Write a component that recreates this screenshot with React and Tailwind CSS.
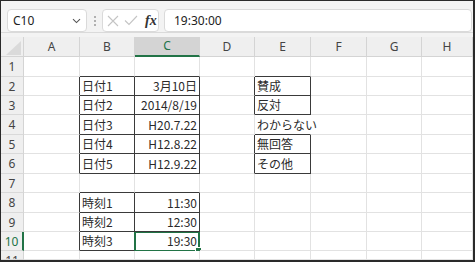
import React from 'react';

const COLS = [
  { key: 'A', w: 'w-[56px]' },
  { key: 'B', w: 'w-[55px]' },
  { key: 'C', w: 'w-[65px]' },
  { key: 'D', w: 'w-[55px]' },
  { key: 'E', w: 'w-[56px]' },
  { key: 'F', w: 'w-[56px]' },
  { key: 'G', w: 'w-[55px]' },
  { key: 'H', w: 'w-[51px]' },
];

const ROW_H = ['h-[20px]', 'h-[19px]', 'h-[19px]', 'h-[20px]', 'h-[19px]', 'h-[20px]', 'h-[19px]', 'h-[20px]', 'h-[19px]', 'h-[19px]', 'h-[9px]'];

const CELLS = {
  B2: '日付1', C2: '3月10日',
  B3: '日付2', C3: '2014/8/19',
  B4: '日付3', C4: 'H20.7.22',
  B5: '日付4', C5: 'H12.8.22',
  B6: '日付5', C6: 'H12.9.22',
  E2: '賛成', E3: '反対', E4: 'わからない', E5: '無回答', E6: 'その他',
  B8: '時刻1', C8: '11:30',
  B9: '時刻2', C9: '12:30',
  B10: '時刻3', C10: '19:30',
};

const RIGHT = ['C2', 'C3', 'C4', 'C5', 'C6', 'C8', 'C9', 'C10'];

const BOXED = new Set([
  'B2', 'C2', 'B3', 'C3', 'B4', 'C4', 'B5', 'C5', 'B6', 'C6',
  'E2', 'E3', 'E5', 'E6',
  'B8', 'C8', 'B9', 'C9', 'B10', 'C10',
]);

const LETTERS = 'ABCDEFGH';

function isBox(col, row) {
  return BOXED.has(col + row);
}

function Cell({ col, row }) {
  const next = LETTERS[LETTERS.indexOf(col.key) + 1];
  const rightDark = isBox(col.key, row) || (next && isBox(next, row));
  const bottomDark = isBox(col.key, row) || isBox(col.key, row + 1);
  const overflowHide = col.key === 'E' && row === 4;
  const id = col.key + row;
  const text = CELLS[id];
  const right = RIGHT.includes(id);

  return (
    <div
      className={`relative shrink-0 ${col.w} h-full border-r border-b ${
        rightDark ? 'border-r-[#3a3a3a]' : overflowHide ? 'border-r-white' : 'border-r-[#e2e2e2]'
      } ${bottomDark ? 'border-b-[#3a3a3a]' : 'border-b-[#e2e2e2]'} flex items-center ${
        right ? 'justify-end pr-[2px]' : 'pl-[2px]'
      } whitespace-nowrap text-[12px] text-[#2a2a2a]`}
    >
      {text && <span className="leading-none">{text}</span>}
      {id === 'C10' && (
        <>
          <div className="absolute left-[-1px] top-[-1px] right-[-1px] bottom-[-2px] border-2 border-[#217346] pointer-events-none" />
          <div className="absolute right-[-2px] bottom-[-3px] w-[5px] h-[5px] bg-[#217346] outline outline-1 outline-white" />
        </>
      )}
    </div>
  );
}

function Toolbar() {
  return (
    <div className="h-[32px] shrink-0 bg-[#f3f3f3] border-b border-[#dadada] flex items-start pt-[8px] pl-[6px] pr-[1px] font-['Noto_Sans','Open_Sans',sans-serif] text-[#222]">
      <div className="w-[80px] h-[23px] rounded-[4px] border border-[#dadada] bg-white flex items-center justify-between pl-[5px] pr-[5px]">
        <span className="text-[12px] leading-none">C10</span>
        <svg width="9" height="6" viewBox="0 0 9 6">
          <path d="M1 1.2 L4.5 4.6 L8 1.2" fill="none" stroke="#555" strokeWidth="1.1" />
        </svg>
      </div>
      <div className="w-[15px] h-[23px] flex flex-col items-center justify-center gap-[2px]">
        <span className="w-[2px] h-[2px] rounded-full bg-[#9a9a9a]" />
        <span className="w-[2px] h-[2px] rounded-full bg-[#9a9a9a]" />
        <span className="w-[2px] h-[2px] rounded-full bg-[#9a9a9a]" />
      </div>
      <div className="w-[57px] h-[23px] rounded-[4px] border border-[#dadada] bg-white flex items-center pl-[4px]">
        <svg width="12" height="12" viewBox="0 0 12 12">
          <path d="M1 1 L11 11 M11 1 L1 11" stroke="#c4c4c4" strokeWidth="1.1" />
        </svg>
        <svg className="ml-[5px]" width="14" height="11" viewBox="0 0 14 11">
          <path d="M1 5.5 L5 9.5 L13 1" fill="none" stroke="#c4c4c4" strokeWidth="1.1" />
        </svg>
        <span className="ml-[7px] font-['Liberation_Serif',serif] italic font-bold text-[14px] leading-none text-[#333]">fx</span>
      </div>
      <div className="flex-1 ml-[5px] h-[23px] rounded-[4px] border border-[#dadada] bg-white flex items-center pl-[9px]">
        <span className="text-[12px] leading-none">19:30:00</span>
      </div>
    </div>
  );
}

function HeaderRow() {
  return (
    <div className="h-[24px] shrink-0 flex bg-[#f3f3f3] font-['Noto_Sans','Open_Sans',sans-serif] text-[12px] text-[#444]">
      <div className="w-[23px] shrink-0 h-full pt-[4px]">
        <div className="h-full border-r border-b border-[#d4d4d4] bg-[#efefef] flex items-end justify-end pr-[2px] pb-[1px]">
          <svg width="15" height="14" viewBox="0 0 15 14">
            <path d="M15 0 L15 14 L0 14 Z" fill="#dadada" />
          </svg>
        </div>
      </div>
      {COLS.map((c) => (
        <div key={c.key} className={`${c.w} shrink-0 h-full pt-[4px]`}>
          {c.key === 'C' ? (
            <div className="h-full bg-[#d4d4d4] border-r border-[#d4d4d4] border-b-2 border-b-[#217346] flex items-center justify-center text-[#217346]">
              {c.key}
            </div>
          ) : (
            <div className="h-full bg-[#efefef] border-r border-b border-[#d4d4d4] flex items-center justify-center">
              {c.key}
            </div>
          )}
        </div>
      ))}
    </div>
  );
}

export default function App() {
  const rows = Array.from({ length: 11 }, (_, i) => i + 1);
  return (
    <div className="w-[475px] h-[262px] overflow-hidden bg-white border-t border-l border-r-2 border-b-2 border-[#2a2a2a] flex flex-col">
      <Toolbar />
      <HeaderRow />
      <div className="flex flex-col font-['Noto_Sans_CJK_JP','Noto_Sans',sans-serif]">
        {rows.map((r) => (
          <div key={r} className={`${ROW_H[r - 1]} shrink-0 flex overflow-hidden`}>
            <div
              className={`w-[23px] shrink-0 h-full overflow-hidden bg-[#efefef] border-b border-b-[#d9d9d9] flex justify-center font-['Noto_Sans','Open_Sans',sans-serif] text-[12px] ${
                r === 10 ? 'border-r-2 border-r-[#217346] text-[#217346]' : 'border-r border-r-[#d4d4d4] text-[#444]'
              } ${r === 11 ? 'items-start' : 'items-center'}`}
            >
              <span className="block shrink-0 h-[19px] leading-[19px]">{r}</span>
            </div>
            {COLS.map((c) => (
              <Cell key={c.key} col={c} row={r} />
            ))}
          </div>
        ))}
      </div>
    </div>
  );
}
